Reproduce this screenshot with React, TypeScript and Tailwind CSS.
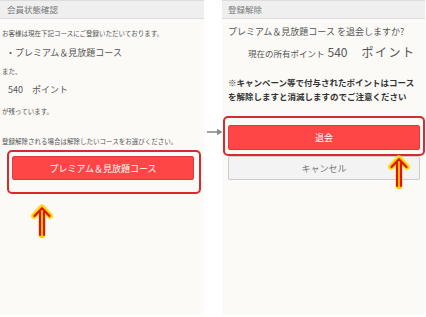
import React from "react";

function UpArrow({ className }: { className?: string }) {
  return (
    <svg className={className} width="24" height="34" viewBox="0 0 24 34" fill="none">
      <g stroke="#ffe14a" strokeWidth="7" strokeLinecap="round" strokeLinejoin="round" opacity="0.55">
        <path d="M4 12 L12 3.5 L20 12" />
        <path d="M12 6 V32" />
      </g>
      <g stroke="#ffd000" strokeWidth="5" strokeLinecap="round" strokeLinejoin="round">
        <path d="M4 12 L12 3.5 L20 12" />
        <path d="M12 6 V32" />
      </g>
      <g stroke="#e0140a" strokeWidth="2.2" strokeLinecap="round" strokeLinejoin="round">
        <path d="M4.5 12 L12 4.2 L19.5 12" />
        <path d="M10 8 V31" />
        <path d="M14 8 V31" />
      </g>
    </svg>
  );
}

function GrayArrow() {
  return (
    <svg width="16" height="8" viewBox="0 0 16 8">
      <path d="M0 4 H11" stroke="#8a8a8a" strokeWidth="1.6" />
      <path d="M10 0.8 L15.5 4 L10 7.2 Z" fill="#8a8a8a" />
    </svg>
  );
}

export default function App() {
  return (
    <div className="w-[426px] h-[317px] bg-white flex font-['Noto_Sans_CJK_JP',sans-serif] text-[#555]">
      {/* Left panel */}
      <div className="w-[204px] h-[315px] bg-[#fbfaf6] flex flex-col">
        <div className="h-[19px] bg-[#efefef] border-t border-b border-[#dcdcdc] flex items-center pl-[7px] text-[8.5px] leading-none text-[#777]">
          会員状態確認
        </div>
        <div className="mt-[8px] pl-[2px] text-[6.5px] leading-[12px] whitespace-nowrap">
          お客様は現在下記コースにご登録いただいております。
        </div>
        <div className="mt-[8px] pl-[6px] text-[9px] leading-[12px] whitespace-nowrap">
          ・プレミアム＆見放題コース
        </div>
        <div className="mt-[6px] pl-[2px] text-[6.5px] leading-[12px]">また、</div>
        <div className="mt-[7px] pl-[8px] text-[9px] leading-[12px] whitespace-nowrap">
          540　ポイント
        </div>
        <div className="mt-[9px] pl-[2px] text-[6.5px] leading-[12px]">が残っています。</div>
        <div className="mt-[18px] pl-[2px] text-[6.5px] leading-[12px] whitespace-nowrap">
          登録解除される場合は解除したいコースをお選びください。
        </div>
        <div className="mt-[3px] ml-[7px] w-[194px] h-[44px] border-2 border-[#d42a30] rounded-[5px] pl-[3px] pt-[4px]">
          <div className="w-[182px] h-[24px] bg-[#ff4646] border border-[#e23a3a] rounded-[2px] flex items-center justify-center text-white text-[9px] leading-none">
            プレミアム＆見放題コース
          </div>
        </div>
        <div className="mt-[10px] ml-[30px]">
          <UpArrow />
        </div>
      </div>

      {/* Middle arrow */}
      <div className="w-[18px] flex flex-col pt-[128px] pl-[3px]">
        <GrayArrow />
      </div>

      {/* Right panel */}
      <div className="relative w-[203px] h-[315px] bg-[#fbfaf6] flex flex-col">
        <div className="h-[19px] bg-[#efefef] border-t border-b border-[#dcdcdc] flex items-center pl-[6px] text-[8.5px] leading-none text-[#777]">
          登録解除
        </div>
        <div className="mt-[7px] pl-[6px] text-[9px] leading-[12px] whitespace-nowrap">
          プレミアム＆見放題コース を退会しますか?
        </div>
        <div className="mt-[7px] pl-[26px] leading-[14px] whitespace-nowrap flex items-baseline">
          <span className="text-[8.5px]">現在の所有ポイント</span>
          <span className="text-[12px] ml-[3px]">540</span>
          <span className="text-[12px] ml-[14px] tracking-[1.5px]">ポイント</span>
        </div>
        <div className="mt-[15px] pl-[6px] text-[8.5px] leading-[14px] font-bold text-[#333] whitespace-nowrap">
          ※キャンペーン等で付与されたポイントはコース
          <br />
          を解除しますと消滅しますのでご注意ください
        </div>
        <div className="mt-[13px] ml-[1px] w-[202px] h-[40px] border-2 border-[#d42a30] rounded-[5px] pl-[3px] pt-[7px]">
          <div className="w-[192px] h-[25px] bg-[#ff4646] border border-[#e23a3a] rounded-[2px] flex items-center justify-center text-white text-[9px] leading-none">
            退会
          </div>
        </div>
        <div className="ml-[6px] w-[192px] h-[24px] bg-[#f3f3f3] border border-[#cccccc] rounded-[2px] flex items-center justify-center text-[#777] text-[9px] leading-none">
          キャンセル
        </div>
        <UpArrow className="absolute left-[165px] top-[155px]" />
      </div>
    </div>
  );
}
